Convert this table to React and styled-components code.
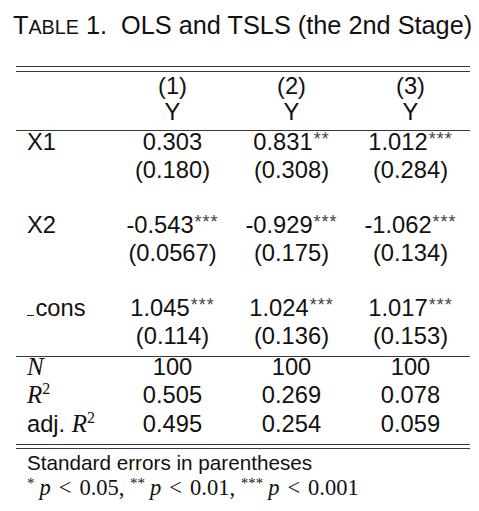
import styled, { createGlobalStyle } from 'styled-components'

const GlobalStyle = createGlobalStyle`
  body {
    margin: 0;
    background: #fff;
    color: #111;
    font-family: "Liberation Sans", Arial, sans-serif;
  }
`

const Page = styled.div`
  padding-top: 5px;
  width: 479px;
`

const Title = styled.h1`
  margin: 0;
  padding-left: 13px;
  font-size: 25.3px;
  font-weight: normal;
  line-height: 40px;
  white-space: nowrap;
`

// fake small caps, the browser's synthetic ones come out too small
const SmallCaps = styled.span`
  font-size: 0.78em;
  text-transform: uppercase;
`

const Table = styled.div`
  margin: 19px 0 0 16px;
  width: 454px;
`

const DoubleRule = styled.div`
  height: ${(props) => props.$gap || 4}px;
  border-top: 1px solid #3a3a3a;
  border-bottom: 1px solid #3a3a3a;
  margin-top: ${(props) => props.$top || 0}px;
`

const Rule = styled.div`
  height: 1px;
  background: #3a3a3a;
  margin-top: ${(props) => props.$top || 0}px;
`

const Section = styled.div`
  padding-top: ${(props) => props.$pad || 0}px;
`

const Row = styled.div`
  display: grid;
  grid-template-columns: 97px repeat(3, 119px);
  height: ${(props) => props.$h}px;
  line-height: ${(props) => props.$lh}px;
  font-size: 23.7px;
  white-space: nowrap;
`

const Label = styled.div`
  padding-left: 11px;
`

const Cell = styled.div`
  text-align: center;
`

const Stars = styled.span`
  font-size: 18px;
  line-height: 0;
  letter-spacing: 1px;
  margin-left: 1px;
  vertical-align: 5px;
  color: #444;
`

const Underscore = styled.span`
  display: inline-block;
  width: 7px;
  height: 1.5px;
  margin-right: 1.5px;
  background: #222;
  vertical-align: baseline;
`

const MathVar = styled.span`
  font-family: "Liberation Serif", "Times New Roman", serif;
  font-style: italic;
  font-size: 25px;
`

const MathSup = styled.sup`
  font-family: "Liberation Serif", "Times New Roman", serif;
  font-size: 16px;
  line-height: 0;
  vertical-align: 9px;
`

const Notes = styled.div`
  padding: 1px 0 0 11px;
  line-height: 25px;
`

const Note = styled.div`
  font-size: 20.7px;
  white-space: nowrap;
`

const MathNote = styled(Note)`
  font-family: "Liberation Serif", "Times New Roman", serif;
  font-size: 22.5px;
`

const NoteStars = styled.span`
  font-size: 15px;
  line-height: 0;
  vertical-align: 7px;
  margin-right: 5px;
`

const Italic = styled.i``

const Rel = styled.span`
  margin: 0 8px;
`

const coefs = [
  {
    label: 'X1',
    values: [['0.303', ''], ['0.831', '**'], ['1.012', '***']],
    errors: ['(0.180)', '(0.308)', '(0.284)'],
  },
  {
    label: 'X2',
    values: [['-0.543', '***'], ['-0.929', '***'], ['-1.062', '***']],
    errors: ['(0.0567)', '(0.175)', '(0.134)'],
  },
  {
    label: (
      <>
        <Underscore />
        cons
      </>
    ),
    values: [['1.045', '***'], ['1.024', '***'], ['1.017', '***']],
    errors: ['(0.114)', '(0.136)', '(0.153)'],
  },
]

const stats = [
  { label: <MathVar>N</MathVar>, values: ['100', '100', '100'] },
  {
    label: (
      <>
        <MathVar>R</MathVar>
        <MathSup>2</MathSup>
      </>
    ),
    values: ['0.505', '0.269', '0.078'],
  },
  {
    label: (
      <>
        adj. <MathVar>R</MathVar>
        <MathSup>2</MathSup>
      </>
    ),
    values: ['0.495', '0.254', '0.059'],
  },
]

const BODY_H = 27.7

function App() {
  return (
    <Page>
      <GlobalStyle />
      <Title>
        T<SmallCaps>able</SmallCaps> 1.&nbsp; OLS and TSLS (the 2nd Stage)
      </Title>
      <Table>
        <DoubleRule $gap={4} />
        <Section $pad={1}>
          <Row $h={26} $lh={26}>
            <Label />
            <Cell>(1)</Cell>
            <Cell>(2)</Cell>
            <Cell>(3)</Cell>
          </Row>
          <Row $h={26} $lh={26}>
            <Label />
            <Cell>Y</Cell>
            <Cell>Y</Cell>
            <Cell>Y</Cell>
          </Row>
        </Section>
        <Rule $top={5} />
        <Section>
          {coefs.map((c, i) => (
            <div key={i}>
              <Row $h={BODY_H} $lh={23}>
                <Label>{c.label}</Label>
                {c.values.map(([v, s], j) => (
                  <Cell key={j}>
                    {v}
                    {s && <Stars>{s}</Stars>}
                  </Cell>
                ))}
              </Row>
              <Row $h={BODY_H} $lh={23}>
                <Label />
                {c.errors.map((e, j) => (
                  <Cell key={j}>{e}</Cell>
                ))}
              </Row>
              {i < coefs.length - 1 && <Row $h={BODY_H} $lh={23} />}
            </div>
          ))}
        </Section>
        <Rule $top={3} />
        <Section>
          {stats.map((s, i) => (
            <Row key={i} $h={28.7} $lh={20}>
              <Label>{s.label}</Label>
              {s.values.map((v, j) => (
                <Cell key={j}>{v}</Cell>
              ))}
            </Row>
          ))}
        </Section>
        <DoubleRule $gap={3} $top={1.5} />
        <Notes>
          <Note>Standard errors in parentheses</Note>
          <MathNote>
            <NoteStars>*</NoteStars>
            <Italic>p</Italic>
            <Rel>&lt;</Rel>0.05, <NoteStars>**</NoteStars>
            <Italic>p</Italic>
            <Rel>&lt;</Rel>0.01, <NoteStars>***</NoteStars>
            <Italic>p</Italic>
            <Rel>&lt;</Rel>0.001
          </MathNote>
        </Notes>
      </Table>
    </Page>
  )
}

export default App
